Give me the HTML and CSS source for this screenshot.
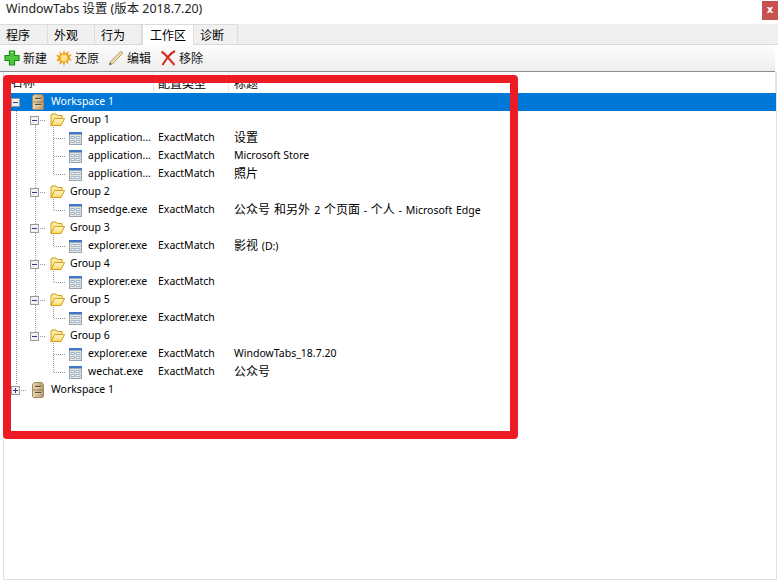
FILE: index.html
```html
<!DOCTYPE html>
<html lang="zh">
<head>
<meta charset="utf-8">
<title>WindowTabs 设置</title>
<link rel="stylesheet" href="styles.css">
</head>
<body>
<svg class="defs" width="0" height="0" aria-hidden="true">
  <defs>
    <linearGradient id="cab" x1="0" y1="0" x2="1" y2="0"><stop offset="0" stop-color="#e6d6b4"/><stop offset="1" stop-color="#b4976a"/></linearGradient>
    <linearGradient id="fold" x1="0" y1="0" x2="0" y2="1"><stop offset="0" stop-color="#fff8d0"/><stop offset="1" stop-color="#f8d860"/></linearGradient>
    <symbol id="cabinet" viewBox="0 0 12 16">
      <path d="M2 .5h8l1.500 2v12l-1 1h-9l-1-1v-12z" fill="url(#cab)" stroke="#a48c62" stroke-width="1"/>
      <path d="M3 4h6v1.200H3zM3 10h6v1.200H3z" fill="#5d4a2c"/>
      <path d="M3 5.600h6M3 11.600h6" stroke="#f4ead6" stroke-width=".8"/>
      <path d="M1 8h10" stroke="#8f7750" stroke-width=".7"/>
    </symbol>
    <symbol id="folder" viewBox="0 0 15 14">
      <path d="M1 12.500V2l1-1h4l1.500 1.500H12V5" fill="#fbe9a0" stroke="#d49f16"/>
      <path d="M1 12.500L4.500 5.500H14.500L11 12.500z" fill="url(#fold)" stroke="#d49f16"/>
    </symbol>
    <symbol id="entry" viewBox="0 0 13 13">
      <rect x=".5" y=".5" width="12" height="12" fill="#ece6d2" stroke="#98a4b4"/>
      <rect x="0" y="0" width="13" height="2.500" fill="#3f76c8"/>
      <path d="M2 4.500h3.500v2H2zM7 4.500h4v2H7zM2 8.500h3.500v2H2zM7 8.500h4v2H7z" fill="#fff" stroke="#8aa6c8" stroke-width=".8"/>
    </symbol>
    <symbol id="minus" viewBox="0 0 9 9">
      <rect x=".5" y=".5" width="8" height="8" fill="#f2f2f2" stroke="#9a9a9a"/>
      <path d="M2 4.500h5" stroke="#27408b"/>
    </symbol>
    <symbol id="plus" viewBox="0 0 9 9">
      <rect x=".5" y=".5" width="8" height="8" fill="#f2f2f2" stroke="#9a9a9a"/>
      <path d="M2 4.500h5M4.500 2v5" stroke="#27408b"/>
    </symbol>
  </defs>
</svg>

<div class="window">
  <header class="titlebar">
    <span class="title">WindowTabs 设置 (版本 2018.7.20)</span>
    <span class="close">x</span>
  </header>

  <nav class="tabs">
    <span class="tab tab-a">程序</span>
    <span class="tab tab-b">外观</span>
    <span class="tab tab-c">行为</span>
    <span class="tab tab-active">工作区</span>
    <span class="tab tab-e">诊断</span>
  </nav>

  <div class="toolbar">
    <span class="tool">
      <svg class="tool-icon" viewBox="0 0 16 16"><path d="M5.500 1h5v4.500H15v5h-4.500V15h-5v-4.500H1v-5h4.500z" fill="#4cc93a" stroke="#1f8a1a" stroke-width="1.200"/><path d="M7 2.500h2" stroke="#b6f0a8"/></svg>
      新建
    </span>
    <span class="tool">
      <svg class="tool-icon" viewBox="0 0 16 16"><path d="M8 0l1.500 3.500L12.500 1l-.5 4 4-.5-2.500 3 2.500 3-4-.2.500 3.900-3-2.500L8 16l-1.500-3.800-3 2.500.5-3.900-4 .2 2.500-3-2.500-3 4 .5-.5-4 3 2.500z" fill="#f0a020"/><circle cx="8" cy="8" r="3.400" fill="#ffe48a"/></svg>
      还原
    </span>
    <span class="tool">
      <svg class="tool-icon" viewBox="0 0 16 16"><path d="M1.500 14.800l.8-3L13 1.200l1.800 1.800L4.300 14z" fill="#f0dfa8" stroke="#a89468" stroke-width=".9"/><path d="M1.500 14.800l.6-2.200 1.600 1.500z" fill="#444"/></svg>
      编辑
    </span>
    <span class="tool">
      <svg class="tool-icon" viewBox="0 0 16 16"><path d="M1.500 1.500Q5 4 8 7.500T14.500 15" fill="none" stroke="#d8362a" stroke-width="2.200"/><path d="M15 1Q11 3 8 7T2.500 15" fill="none" stroke="#c92a20" stroke-width="2"/></svg>
      移除
    </span>
  </div>

  <main class="list">
    <div class="head">
      <span class="hcell col-name">名称</span>
      <span class="hcell col-type">配置类型</span>
      <span class="hcell col-title">标题</span>
    </div>

    <div class="tree">
      <svg class="guides" width="100" height="306" viewBox="0 0 100 306">
        <g stroke="#9a9a9a" stroke-dasharray="1 1" fill="none">
          <path d="M16.500 14V292M35.500 32V248M53.500 32V81M53.500 104V117M53.500 140V153M53.500 176V189M53.500 212V225M53.500 248V279"/>
          <path d="M21 9.500h6M21 297.500h6M40 27.500h6M40 99.500h6M40 135.500h6M40 171.500h6M40 207.500h6M40 243.500h6"/>
          <path d="M54 45.500h12M54 63.500h12M54 81.500h12M54 117.500h12M54 153.500h12M54 189.500h12M54 225.500h12M54 261.500h12M54 279.500h12"/>
        </g>
      </svg>

      <div class="row selected">
        <span class="col-name lvl0"><svg class="exp"><use href="#minus"/></svg><svg class="ic-cab"><use href="#cabinet"/></svg><span class="label">Workspace 1</span></span>
      </div>

      <div class="row"><span class="col-name lvl1"><svg class="exp"><use href="#minus"/></svg><svg class="ic-fold"><use href="#folder"/></svg><span class="label">Group 1</span></span></div>
      <div class="row"><span class="col-name lvl2"><svg class="ic-entry"><use href="#entry"/></svg><span class="label">application...</span></span><span class="col-type label">ExactMatch</span><span class="col-title label"><span class="cjk">设置</span></span></div>
      <div class="row"><span class="col-name lvl2"><svg class="ic-entry"><use href="#entry"/></svg><span class="label">application...</span></span><span class="col-type label">ExactMatch</span><span class="col-title label">Microsoft Store</span></div>
      <div class="row"><span class="col-name lvl2"><svg class="ic-entry"><use href="#entry"/></svg><span class="label">application...</span></span><span class="col-type label">ExactMatch</span><span class="col-title label"><span class="cjk">照片</span></span></div>

      <div class="row"><span class="col-name lvl1"><svg class="exp"><use href="#minus"/></svg><svg class="ic-fold"><use href="#folder"/></svg><span class="label">Group 2</span></span></div>
      <div class="row"><span class="col-name lvl2"><svg class="ic-entry"><use href="#entry"/></svg><span class="label">msedge.exe</span></span><span class="col-type label">ExactMatch</span><span class="col-title label wide"><span class="cjk">公众号 和另外 </span>2 <span class="cjk">个页面</span> - <span class="cjk">个人</span> - Microsoft Edge</span></div>

      <div class="row"><span class="col-name lvl1"><svg class="exp"><use href="#minus"/></svg><svg class="ic-fold"><use href="#folder"/></svg><span class="label">Group 3</span></span></div>
      <div class="row"><span class="col-name lvl2"><svg class="ic-entry"><use href="#entry"/></svg><span class="label">explorer.exe</span></span><span class="col-type label">ExactMatch</span><span class="col-title label wide"><span class="cjk">影视</span> (D:)</span></div>

      <div class="row"><span class="col-name lvl1"><svg class="exp"><use href="#minus"/></svg><svg class="ic-fold"><use href="#folder"/></svg><span class="label">Group 4</span></span></div>
      <div class="row"><span class="col-name lvl2"><svg class="ic-entry"><use href="#entry"/></svg><span class="label">explorer.exe</span></span><span class="col-type label">ExactMatch</span></div>

      <div class="row"><span class="col-name lvl1"><svg class="exp"><use href="#minus"/></svg><svg class="ic-fold"><use href="#folder"/></svg><span class="label">Group 5</span></span></div>
      <div class="row"><span class="col-name lvl2"><svg class="ic-entry"><use href="#entry"/></svg><span class="label">explorer.exe</span></span><span class="col-type label">ExactMatch</span></div>

      <div class="row"><span class="col-name lvl1"><svg class="exp"><use href="#minus"/></svg><svg class="ic-fold"><use href="#folder"/></svg><span class="label">Group 6</span></span></div>
      <div class="row"><span class="col-name lvl2"><svg class="ic-entry"><use href="#entry"/></svg><span class="label">explorer.exe</span></span><span class="col-type label">ExactMatch</span><span class="col-title label">WindowTabs_18.7.20</span></div>
      <div class="row"><span class="col-name lvl2"><svg class="ic-entry"><use href="#entry"/></svg><span class="label">wechat.exe</span></span><span class="col-type label">ExactMatch</span><span class="col-title label"><span class="cjk">公众号</span></span></div>

      <div class="row"><span class="col-name lvl0"><svg class="exp"><use href="#plus"/></svg><svg class="ic-cab"><use href="#cabinet"/></svg><span class="label">Workspace 1</span></span></div>
    </div>
  </main>

  <div class="annotation"></div>
</div>
</body>
</html>
```

FILE: styles.css
```css
* { box-sizing: border-box; }

html, body {
  margin: 0;
  height: 100%;
  background: #fff;
}

.defs { position: absolute; }

.window {
  position: relative;
  width: 778px;
  height: 580px;
  display: flex;
  flex-direction: column;
  overflow: hidden;
  font-family: "Noto Sans", "Noto Sans CJK SC", sans-serif;
  font-size: 10.500px;
  color: #000;
}

.titlebar {
  height: 24px;
  flex: none;
  display: flex;
  justify-content: space-between;
  padding-left: 6px;
  line-height: 18px;
  font-size: 12.400px;
  color: #222;
}

.title { white-space: pre; }

.close {
  width: 16px;
  height: 19px;
  margin-top: 1px;
  background: #c75050;
  color: #fff;
  font: bold 10px/18px "DejaVu Sans", sans-serif;
  text-align: center;
}

.tabs {
  height: 21px;
  flex: none;
  display: flex;
  align-items: flex-end;
  background: #efefef;
  border-bottom: 1px solid #d9d9d9;
}

.tab {
  height: 20px;
  font-size: 12px;
  line-height: 22px;
  padding-left: 6px;
  border: solid #dcdcdc;
  border-width: 1px 1px 0 0;
  background: #f0f0f0;
}

.tab-a { width: 48px; }
.tab-b { width: 47px; }
.tab-c { width: 47px; }
.tab-e { width: 44px; }

.tab-active {
  width: 52px;
  height: 21px;
  margin-bottom: -1px;
  padding-left: 7px;
  background: #fff;
  border-width: 1px 1px 0 1px;
  position: relative;
  line-height: 21px;
}

.toolbar {
  height: 27px;
  margin-right: 3px;
  flex: none;
  display: flex;
  align-items: center;
  gap: 9px;
  padding-left: 4px;
  background: linear-gradient(#fcfcfc, #eeeeee);
  border-bottom: 1px solid #8c8c8c;
  font-size: 12px;
}

.tool {
  display: flex;
  align-items: center;
  gap: 3px;
  color: #111;
}

.tool-icon {
  width: 16px;
  height: 16px;
}

.list {
  flex: 1;
  margin: 0 1px 0 3px;
  border: solid #dfdfdf;
  border-width: 0 1px 1px 1px;
  display: flex;
  flex-direction: column;
}

.head {
  height: 21px;
  flex: none;
  display: flex;
  font-size: 12px;
  line-height: 23px;
}

.hcell {
  height: 20px;
  border-right: 1px solid #e4e4e4;
}

.head .col-name { padding-left: 7px; width: 150px; }
.head .col-type { padding-left: 4px; width: 75px; }
.head .col-title { padding-left: 5px; width: 350px; }

.tree { position: relative; }

.guides {
  position: absolute;
  left: -4px;
  top: 0;
}

.row {
  position: relative;
  height: 18px;
  display: flex;
  align-items: center;
  white-space: pre;
}

.row.selected {
  background: #0078d7;
  color: #fff;
}

.label { padding-bottom: 2px; }

.cjk { font-size: 12px; }

.wide { word-spacing: 1px; }

.col-name {
  width: 150px;
  flex: none;
  display: flex;
  align-items: center;
}

.col-type {
  width: 76px;
  flex: none;
  padding-left: 4px;
}

.col-title {
  flex: 1;
  padding-left: 4px;
}

.lvl0 { padding-left: 7px; }
.lvl1 { padding-left: 26px; }
.lvl2 { padding-left: 65px; }

.exp {
  width: 9px;
  height: 9px;
  flex: none;
  background: #fff;
}

.ic-cab {
  width: 12px;
  height: 16px;
  margin: 0 7px 0 12px;
  flex: none;
}

.ic-fold {
  width: 15px;
  height: 14px;
  margin: 0 5px 0 11px;
  flex: none;
}

.ic-entry {
  width: 13px;
  height: 13px;
  margin-right: 6px;
  flex: none;
}

.annotation {
  position: absolute;
  left: 3px;
  top: 75px;
  width: 515px;
  height: 364px;
  border: 8px solid #ed1c24;
  border-radius: 4px;
  pointer-events: none;
}
```
